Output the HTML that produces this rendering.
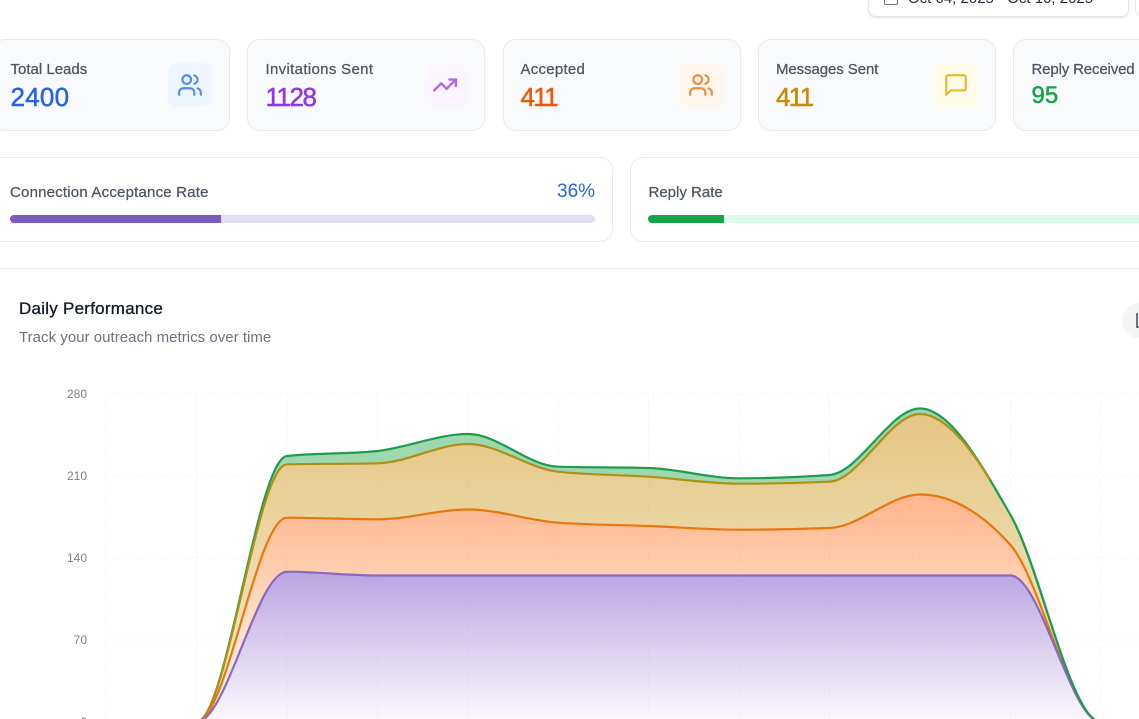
<!DOCTYPE html>
<html><head><meta charset="utf-8"><style>
html,body{margin:0;padding:0;background:#fff;width:1139px;height:719px;overflow:hidden}
#w{position:relative;width:1139px;height:719px;overflow:hidden;font-family:"Liberation Sans",sans-serif}
.a{position:absolute;box-sizing:border-box;white-space:nowrap}
.card{top:39px;height:92px;width:238px;background:#f9fafb;border:1px solid #e8eaee;border-radius:13px}
.lab{top:61px;font-size:15px;line-height:18px;color:#4b5563;-webkit-text-stroke:.25px #4b5563}
.val{top:81px;font-size:26px;line-height:32px;-webkit-text-stroke:.5px currentColor}
.ib{top:63px;width:44px;height:44px;border-radius:8px}
.ib svg{position:absolute;left:9px;top:9px}
.pc{top:157px;height:85px;background:#fff;border:1px solid #e9ebee;border-radius:13px}
.y{font-size:12px;line-height:14px;color:#7a7f87;width:40px;text-align:right;left:47px}
</style></head><body><div id="w">
<div class="a" style="left:868px;top:-30px;width:261px;height:47px;background:#fff;border:1px solid #e5e7eb;border-radius:8px;box-shadow:0 1px 2px rgba(0,0,0,.12)"></div>
<div class="a" style="left:1135px;top:-30px;width:30px;height:47px;background:#fff;border:1px solid #e5e7eb;border-radius:8px"></div>
<div class="a" style="left:884px;top:-8px;width:14px;height:13px;border:1.5px solid #6b7280;border-radius:2px"></div>
<div class="a" style="left:908px;top:-9px;font-size:15px;line-height:16px;color:#1f2937">Oct 04, 2025 - Oct 10, 2025</div>

<div class="a card" style="left:-8px;width:238px"></div>
<div class="a card" style="left:247px"></div>
<div class="a card" style="left:502.5px"></div>
<div class="a card" style="left:758px"></div>
<div class="a card" style="left:1013px;width:200px"></div>

<div class="a lab" style="left:10.5px">Total Leads</div>
<div class="a val" style="left:10.5px;color:#2563eb;letter-spacing:.25px">2400</div>
<div class="a ib" style="left:168px;background:#eff6ff"><svg width="26" height="26" viewBox="0 0 24 24" fill="none" stroke="#4f8df0" stroke-width="2" stroke-linecap="round" stroke-linejoin="round"><path d="M16 21v-2a4 4 0 0 0-4-4H6a4 4 0 0 0-4 4v2"/><circle cx="9" cy="7" r="4"/><path d="M22 21v-2a4 4 0 0 0-3-3.87"/><path d="M16 3.13a4 4 0 0 1 0 7.75"/></svg></div>

<div class="a lab" style="left:265.5px;letter-spacing:.33px">Invitations Sent</div>
<div class="a val" style="left:265.5px;color:#9333ea;letter-spacing:-1.5px">1128</div>
<div class="a ib" style="left:423px;background:#faf5ff"><svg width="26" height="26" viewBox="0 0 24 24" fill="none" stroke="#b066ee" stroke-width="2.2" stroke-linecap="round" stroke-linejoin="round"><path d="M22 7l-8.5 8.5-5-5L2 17"/><path d="M16 7h6v6"/></svg></div>

<div class="a lab" style="left:520.5px;letter-spacing:.25px">Accepted</div>
<div class="a val" style="left:520.5px;color:#ea580c;letter-spacing:-1.7px">411</div>
<div class="a ib" style="left:679px;background:#fff7ed"><svg width="26" height="26" viewBox="0 0 24 24" fill="none" stroke="#f28a3c" stroke-width="2" stroke-linecap="round" stroke-linejoin="round"><path d="M16 21v-2a4 4 0 0 0-4-4H6a4 4 0 0 0-4 4v2"/><circle cx="9" cy="7" r="4"/><path d="M22 21v-2a4 4 0 0 0-3-3.87"/><path d="M16 3.13a4 4 0 0 1 0 7.75"/></svg></div>

<div class="a lab" style="left:776px;letter-spacing:-.08px">Messages Sent</div>
<div class="a val" style="left:776px;color:#ca8a04;letter-spacing:-1.7px">411</div>
<div class="a ib" style="left:934px;background:#fefce8"><svg width="26" height="26" viewBox="0 0 24 24" fill="none" stroke="#eab72c" stroke-width="2" stroke-linecap="round" stroke-linejoin="round"><path d="M21 15a2 2 0 0 1-2 2H7l-4 4V5a2 2 0 0 1 2-2h14a2 2 0 0 1 2 2z"/></svg></div>

<div class="a lab" style="left:1031.5px;letter-spacing:-.15px">Reply Received</div>
<div class="a val" style="left:1031.5px;top:80px;font-size:24px;color:#16a34a">95</div>

<div class="a pc" style="left:-10px;width:623px"></div>
<div class="a pc" style="left:630px;width:600px"></div>
<div class="a" style="left:10px;top:184px;font-size:15px;line-height:18px;color:#4b5563;letter-spacing:.2px;-webkit-text-stroke:.25px #4b5563">Connection Acceptance Rate</div>
<div class="a" style="left:557px;top:181px;font-size:19px;line-height:22px;color:#2563eb">36%</div>
<div class="a" style="left:10px;top:215px;width:585px;height:8px;background:#e3dcf3;border-radius:4px;overflow:hidden"><div style="width:211px;height:8px;background:#7c5bbf"></div></div>
<div class="a" style="left:648.5px;top:184px;font-size:15px;line-height:18px;color:#4b5563;-webkit-text-stroke:.25px #4b5563">Reply Rate</div>
<div class="a" style="left:648px;top:215px;width:560px;height:8px;background:#dcfce7;border-radius:4px;overflow:hidden"><div style="width:76px;height:8px;background:#16a34a"></div></div>

<div class="a" style="left:-10px;top:268px;width:1170px;height:1px;background:#eceef0"></div>
<div class="a" style="left:19px;top:299px;font-size:17px;line-height:20px;color:#111827;letter-spacing:.25px;-webkit-text-stroke:.3px #111827">Daily Performance</div>
<div class="a" style="left:19px;top:329px;font-size:15px;line-height:18px;color:#6b7280;letter-spacing:.03px">Track your outreach metrics over time</div>
<div class="a" style="left:1122px;top:303px;width:36px;height:35px;border-radius:18px;background:#f3f4f6"></div>
<div class="a" style="left:1136px;top:313px;width:6px;height:15px;border-left:2px solid #6b7280;border-bottom:2px solid #6b7280"></div>

<div class="a y" style="top:387px">280</div>
<div class="a y" style="top:469px">210</div>
<div class="a y" style="top:551px">140</div>
<div class="a y" style="top:633px">70</div>
<div class="a y" style="top:715px">0</div>

<svg class="a" style="left:0;top:0" width="1139" height="719" viewBox="0 0 1139 719">
<defs>
<linearGradient id="gy" gradientUnits="userSpaceOnUse" x1="0" y1="414" x2="0" y2="722"><stop offset="0" stop-color="#e5c583"/><stop offset="1" stop-color="#f2f0d4"/></linearGradient>
<linearGradient id="go" gradientUnits="userSpaceOnUse" x1="0" y1="495" x2="0" y2="722"><stop offset="0" stop-color="#ffb58c"/><stop offset="1" stop-color="#fffff3"/></linearGradient>
<linearGradient id="gp" gradientUnits="userSpaceOnUse" x1="0" y1="572" x2="0" y2="722"><stop offset="0" stop-color="#baa5e1"/><stop offset="1" stop-color="#fbf9fe"/></linearGradient>
</defs>
<g stroke="#f3f4f6" stroke-width="1" stroke-dasharray="3 3" fill="none">
<path d="M106 394H1139M106 476H1139M106 558H1139M106 640H1139"/>
<path d="M106 394V719M196.5 394V719M287 394V719M377.5 394V719M468 394V719M558 394V719M648.5 394V719M739 394V719M829.5 394V719M920 394V719M1010.5 394V719M1101 394V719"/>
</g>
<path fill="#9dd8ae" d="M196.5 722C226.7 722,256.8 459.33,287 456C317.2 452.67,347.3 454.33,377.5 451C407.7 447.67,437.8 434,468 434C498 434,528 465.83,558 466.7C588 467.57,618.5 467.13,648.5 468C678.5 468.87,709 478.3,739 478.3C769 478.3,799.5 477.2,829.5 475C859.5 472.8,890 408.5,920 408.5C950 408.5,980.5 462.75,1010.5 515C1040.5 567.25,1071 722,1101 722Z"/>
<path fill="url(#gy)" d="M196.5 722C226.7 722,256.8 464.97,287 464.3C317.2 463.63,347.3 463.97,377.5 463.3C407.7 462.63,437.8 444,468 444C498 444,528 468.37,558 471.7C588 475.03,618.5 474.7,648.5 476.7C678.5 478.7,709 483.7,739 483.7C769 483.7,799.5 483.03,829.5 481.7C859.5 480.37,890 414,920 414C950 414,980.5 464.67,1010.5 516C1040.5 567.33,1071 722,1101 722Z"/>
<path fill="url(#go)" d="M196.5 722C226.7 722,256.8 517.7,287 517.7C317.2 517.7,347.3 519.3,377.5 519.3C407.7 519.3,437.8 509.5,468 509.5C498 509.5,528 520.5,558 522.7C588 524.9,618.5 524.83,648.5 526C678.5 527.17,709 529.7,739 529.7C769 529.7,799.5 529.13,829.5 528C859.5 526.87,890 494.5,920 494.5C950 494.5,980.5 511.33,1010.5 545C1040.5 578.67,1071 722,1101 722Z"/>
<path fill="url(#gp)" d="M196.5 722C226.7 722,256.8 571.7,287 571.7C317.2 571.7,347.3 575.5,377.5 575.5L1010.5 575.5C1040.5 575.5,1071 722,1101 722Z"/>
<g stroke="#8f7fb0" stroke-opacity=".07" stroke-width="1" stroke-dasharray="3 3" fill="none">
<path d="M287 470V719M377.5 470V719M468 450V719M558 480V719M648.5 480V719M739 490V719M829.5 490V719M920 420V719M1010.5 530V719"/>
<path d="M270 558H1020M230 640H1060"/>
</g>
<g fill="none" stroke-width="2.2">
<path stroke="#1f9c4d" d="M196.5 722C226.7 722,256.8 459.33,287 456C317.2 452.67,347.3 454.33,377.5 451C407.7 447.67,437.8 434,468 434C498 434,528 465.83,558 466.7C588 467.57,618.5 467.13,648.5 468C678.5 468.87,709 478.3,739 478.3C769 478.3,799.5 477.2,829.5 475C859.5 472.8,890 408.5,920 408.5C950 408.5,980.5 462.75,1010.5 515C1040.5 567.25,1071 722,1101 722"/>
<path stroke="#ae8f17" d="M196.5 722C226.7 722,256.8 464.97,287 464.3C317.2 463.63,347.3 463.97,377.5 463.3C407.7 462.63,437.8 444,468 444C498 444,528 468.37,558 471.7C588 475.03,618.5 474.7,648.5 476.7C678.5 478.7,709 483.7,739 483.7C769 483.7,799.5 483.03,829.5 481.7C859.5 480.37,890 414,920 414C950 414,980.5 464.67,990 480"/>
<path stroke="#ea760f" d="M196.5 722C226.7 722,256.8 517.7,287 517.7C317.2 517.7,347.3 519.3,377.5 519.3C407.7 519.3,437.8 509.5,468 509.5C498 509.5,528 520.5,558 522.7C588 524.9,618.5 524.83,648.5 526C678.5 527.17,709 529.7,739 529.7C769 529.7,799.5 529.13,829.5 528C859.5 526.87,890 494.5,920 494.5C950 494.5,980.5 511.33,1010.5 545C1040.5 578.67,1071 722,1101 722"/>
<path stroke="#8d66bd" d="M196.5 722C226.7 722,256.8 571.7,287 571.7C317.2 571.7,347.3 575.5,377.5 575.5L1010.5 575.5C1040.5 575.5,1071 722,1101 722"/>
<path stroke="#1f9c4d" d="M1010.5 515C1040.5 567.25,1071 722,1101 722"/>
</g>
</svg>
</div></body></html>
